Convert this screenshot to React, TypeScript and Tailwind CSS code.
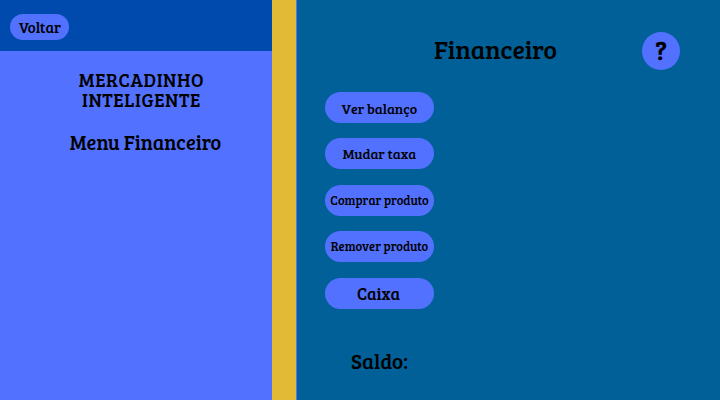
const menuItems = [
  { label: "Ver balanço", text: "text-[14px] pt-[3px]", gap: "mt-[92px]" },
  { label: "Mudar taxa", text: "text-[14px] pt-[1px]", gap: "mt-[15px]" },
  { label: "Comprar produto", text: "text-[12.6px]", gap: "mt-[15.5px]" },
  { label: "Remover produto", text: "text-[12.6px]", gap: "mt-[15.5px]" },
  { label: "Caixa", text: "text-[16.8px] pr-[2px] pt-[1.5px]", gap: "mt-[16px]" },
];

function Sidebar() {
  return (
    <aside className="w-[272px] shrink-0 bg-[#5271ff]">
      <div className="h-[50.5px] bg-[#004aad] pl-[10px] pt-[14px]">
        <button className="flex h-[26px] w-[59px] items-center justify-center rounded-full bg-[#5271ff] pl-[1px] pt-[1px] text-[15px] leading-none whitespace-nowrap">
          Voltar
        </button>
      </div>
      <h1 className="ml-[41.5px] mt-[19.5px] w-[200px] text-center text-[18.8px] leading-[20px] tracking-[0.65px] whitespace-nowrap">
        <span className="block">MERCADINHO</span>
        <span className="block">INTELIGENTE</span>
      </h1>
      <h2 className="ml-[45.5px] mt-[22px] w-[200px] text-center text-[20.2px] leading-[20px] whitespace-nowrap">
        Menu Financeiro
      </h2>
    </aside>
  );
}

export default function App() {
  return (
    <div className="flex h-[400px] w-[720px] overflow-hidden bg-[#006097] font-['Bree_Serif','DejaVu_Serif_Condensed','DejaVu_Serif',serif] text-black">
      <Sidebar />
      <div className="w-[25px] shrink-0 border-r border-[#5271ff] bg-[#e2ba36]" />
      <main className="flex flex-1">
        <div className="ml-[28px] w-[109px]">
          <nav>
            {menuItems.map((item) => (
              <button
                key={item.label}
                className={`flex h-[31px] w-[109px] items-center justify-center rounded-full bg-[#5271ff] leading-none whitespace-nowrap ${item.text} ${item.gap}`}
              >
                {item.label}
              </button>
            ))}
          </nav>
          <p className="mt-[41px] text-center text-[21px] leading-[22px]">Saldo:</p>
        </div>
        <h2 className="mt-[37px] w-[123px] text-center text-[25.5px] leading-[24px] whitespace-nowrap">
          Financeiro
        </h2>
        <button className="ml-[85px] mt-[32px] flex size-[38px] items-center justify-center rounded-full bg-[#5271ff] pb-[4px] text-[27px] leading-none [-webkit-text-stroke:0.4px_black]">
          ?
        </button>
      </main>
    </div>
  );
}
